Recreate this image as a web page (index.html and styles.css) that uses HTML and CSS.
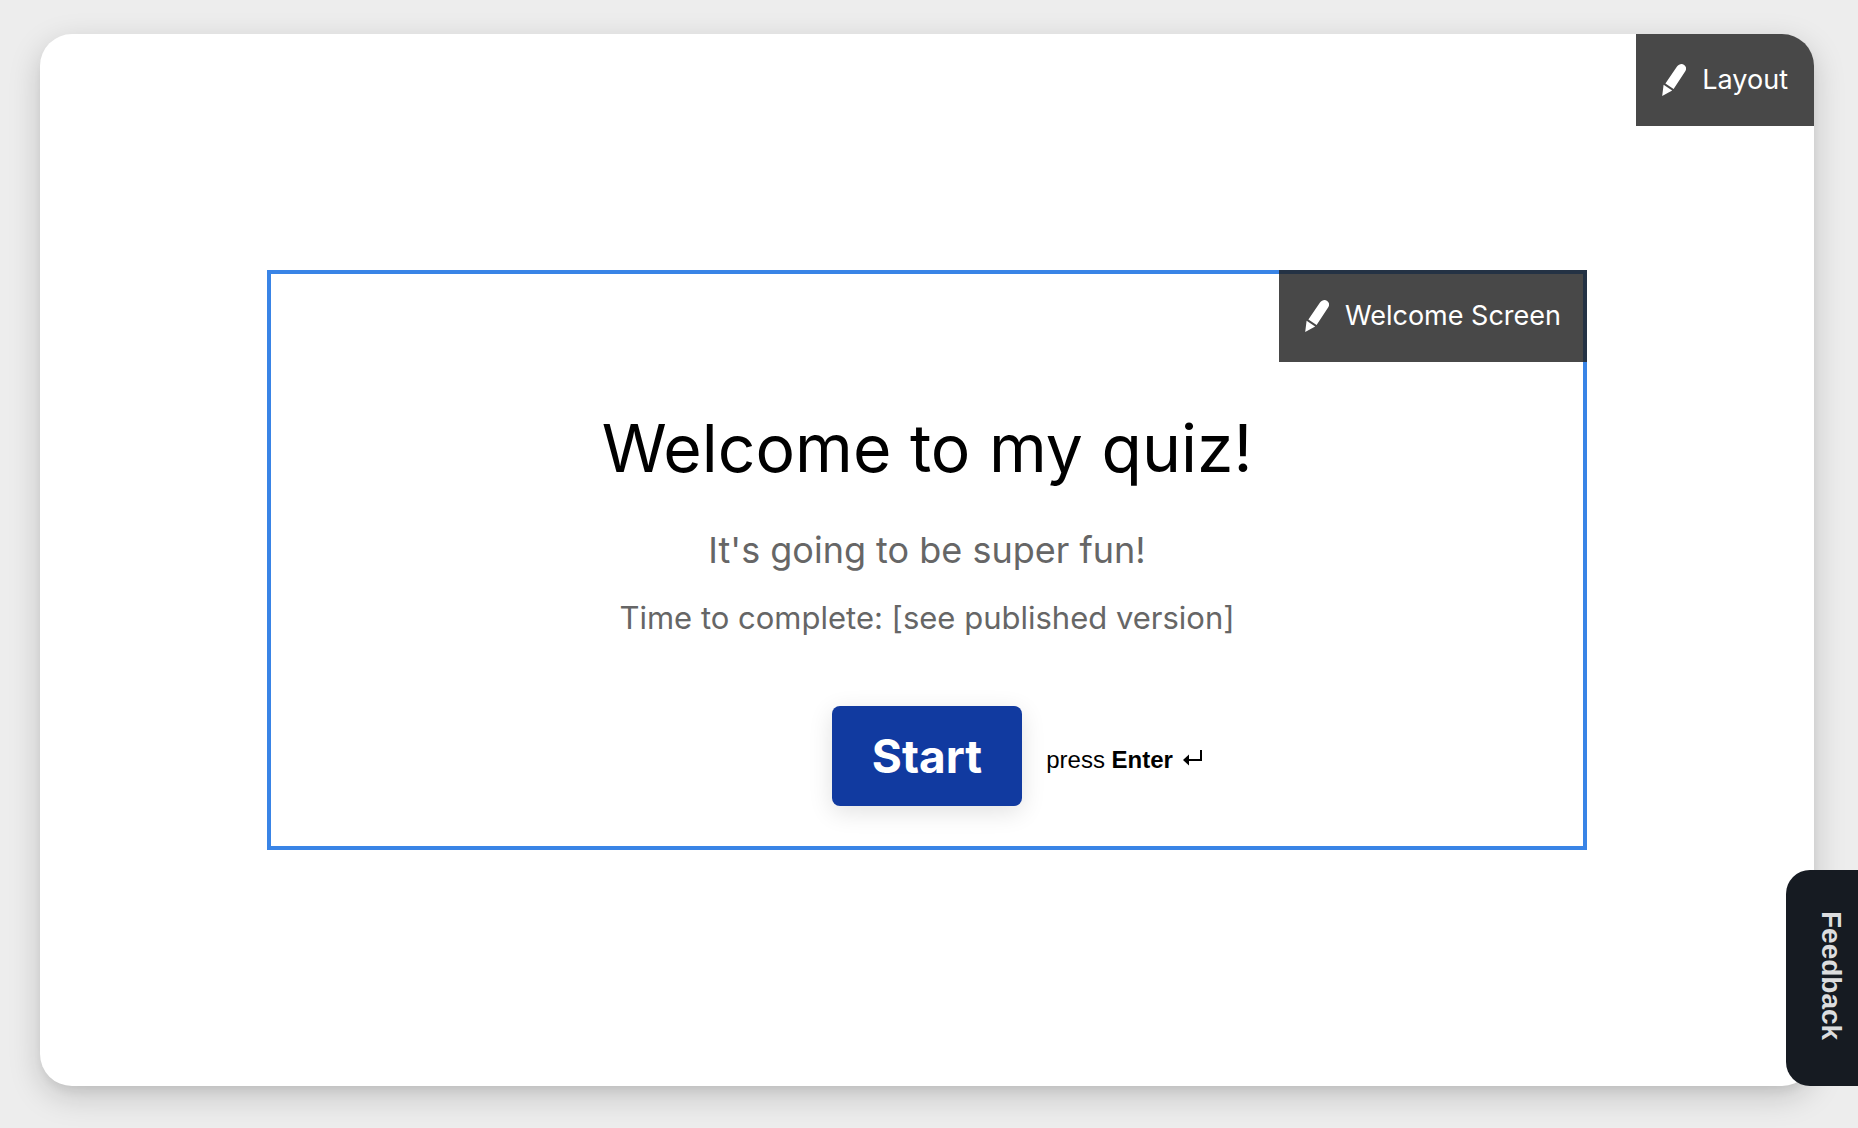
FILE: index.html
```html
<!DOCTYPE html>
<html lang="en">

<head>
  <meta charset="UTF-8">
  <meta name="viewport" content="width=device-width, initial-scale=1.0">
  <title>Quiz editor</title>
  <link rel="stylesheet" href="styles.css">
</head>

<body>

  <main class="card">
    <button class="edit-btn edit-layout" type="button">
      <svg class="pencil" viewBox="0 0 24 32" aria-hidden="true">
        <path d="M3.4 19.4 15 2.6C16.8 0 20-.7 22.2.9c2.2 1.6 2.5 4.3.9 6.7L11.6 24.9z"/>
        <path d="M1.6 20.7 10.2 26.6.2 32z"/>
      </svg>
      Layout
    </button>

    <section class="screen">
      <button class="edit-btn edit-screen" type="button">
        <svg class="pencil" viewBox="0 0 24 32" aria-hidden="true">
          <path d="M3.4 19.4 15 2.6C16.8 0 20-.7 22.2.9c2.2 1.6 2.5 4.3.9 6.7L11.6 24.9z"/>
          <path d="M1.6 20.7 10.2 26.6.2 32z"/>
        </svg>
        Welcome Screen
      </button>

      <h1 class="title">Welcome to my quiz!</h1>
      <p class="subtitle">It's going to be super fun!</p>
      <p class="time">Time to complete: [see published version]</p>

      <div class="actions">
        <button class="start-btn" type="button">Start</button>
        <div class="hint">
          <span>press <strong>Enter</strong></span>
          <svg class="enter-icon" viewBox="0 0 20 16" aria-hidden="true">
            <path class="enter-line" d="M4 10H18V0"/>
            <path d="M0 10 6 4.5v11z"/>
          </svg>
        </div>
      </div>
    </section>
  </main>

  <button class="feedback-btn" type="button">Feedback</button>

</body>

</html>
```

FILE: styles.css
```css
* {
  box-sizing: border-box;
}

body {
  display: flex;
  min-height: 100vh;
  margin: 0;
  padding: 34px 44px 42px 40px;
  background-color: #ededed;
  color: #000;
  font-family: Inter, sans-serif;
}

button {
  border: none;
  font-family: inherit;
  cursor: pointer;
}

.card {
  position: relative;
  flex: 1;
  display: flex;
  align-items: center;
  justify-content: center;
  background-color: #fff;
  border-radius: 32px;
  box-shadow: 0 6px 12px -4px rgba(0, 0, 0, 0.08), 0 10px 32px rgba(0, 0, 0, 0.18);
}

/* Edit badges, pinned to the top right corner */
.edit-btn {
  position: absolute;
  display: flex;
  align-items: center;
  gap: 16px;
  padding: 28px 26px;
  background-color: rgba(32, 32, 32, 0.82);
  color: #fff;
  font-size: 27px;
  line-height: 36px;
}

.edit-layout {
  top: 0;
  right: 0;
  border-top-right-radius: 32px;
}

.edit-screen {
  top: -4px;
  right: -4px;
}

.pencil {
  width: 24px;
  height: 32px;
  fill: #fff;
}

.screen {
  position: relative;
  width: 100%;
  max-width: 1320px;
  padding: 130px 40px 40px;
  border: 4px solid #3984e6;
  text-align: center;
}

.title {
  margin: 0 0 34px;
  font-size: 66px;
  font-weight: 400;
  line-height: 88px;
}

.subtitle,
.time {
  margin: 0;
  color: #666;
}

.subtitle {
  margin-bottom: 24px;
  font-size: 36px;
  line-height: 48px;
}

.time {
  margin-bottom: 68px;
  font-size: 31px;
  line-height: 40px;
}

/* Button stays centered, the hint sits in the right column */
.actions {
  display: grid;
  grid-template-columns: 1fr auto 1fr;
  align-items: center;
}

.start-btn {
  grid-column: 2;
  padding: 20px 40px;
  border-radius: 8px;
  background-color: #113aa0;
  box-shadow: 0 6px 24px rgba(0, 0, 0, 0.12);
  color: #fff;
  font-size: 46px;
  font-weight: 700;
  line-height: 60px;
}

.hint {
  display: flex;
  align-items: center;
  gap: 10px;
  padding: 8px 0 0 24px;
  font-family: "Liberation Sans", Arial, sans-serif;
  font-size: 24px;
  line-height: 28px;
}

.enter-icon {
  width: 20px;
  height: 16px;
  margin-bottom: 4px;
}

.enter-line {
  fill: none;
  stroke: #000;
  stroke-width: 2;
}

.feedback-btn {
  position: fixed;
  right: 0;
  bottom: 42px;
  padding: 41px 11px 46px 29px;
  border-radius: 24px 0 0 24px;
  background-color: #161b22;
  color: #dcdddf;
  font-family: "Liberation Sans", Arial, sans-serif;
  font-size: 28px;
  font-weight: 700;
  line-height: 32px;
  writing-mode: vertical-rl;
}
```
